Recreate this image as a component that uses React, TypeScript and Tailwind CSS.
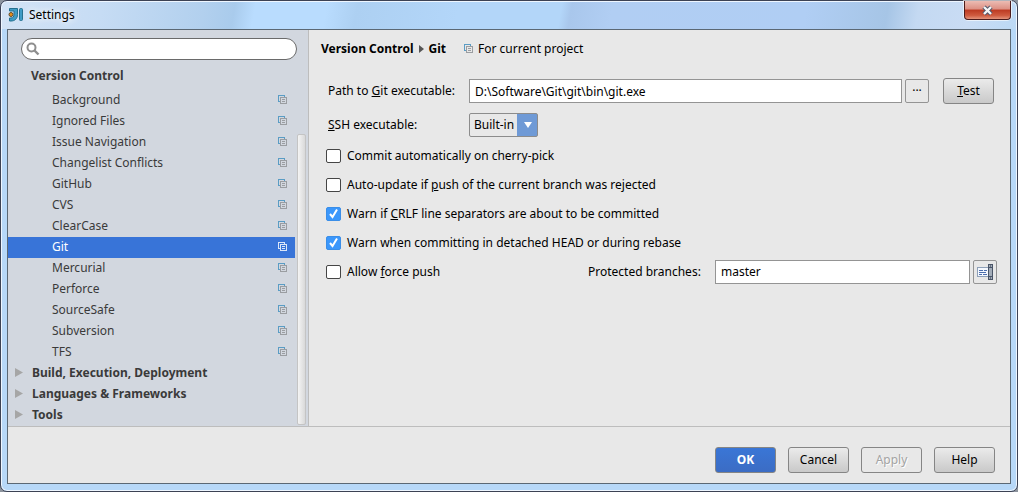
import { useState } from "react"
import type { ReactNode } from "react"
import { clsx } from "clsx"

const versionControlItems = [
  "Background",
  "Ignored Files",
  "Issue Navigation",
  "Changelist Conflicts",
  "GitHub",
  "CVS",
  "ClearCase",
  "Git",
  "Mercurial",
  "Perforce",
  "SourceSafe",
  "Subversion",
  "TFS",
]

const groups = ["Build, Execution, Deployment", "Languages & Frameworks", "Tools"]

function AppLogo() {
  return (
    <svg width="16" height="16" viewBox="0 0 16 16" aria-hidden="true">
      <path
        d="M2.5 1.500h8V7.500c0 4-2.500 6.500-6.500 6.500H2.500v-3H4c2 0 3-1.500 3-3.500V4H2.500z"
        fill="#3f9cc6"
        stroke="#24708f"
      />
      <rect x="12.500" y="1.500" width="3" height="12" rx="1" fill="#3f9cc6" stroke="#24708f" />
      <circle cx="4" cy="7.500" r="2" fill="#e8901c" stroke="#5d4a2a" />
    </svg>
  )
}

function ProjectIcon({ selected = false }: { selected?: boolean }) {
  const back = selected ? "#dbe6f8" : "#5a9cc4"
  const front = selected ? "#dbe6f8" : "#9a9da1"
  return (
    <svg className="shrink-0" width="9" height="9" viewBox="0 0 9 9" aria-hidden="true" shapeRendering="crispEdges">
      <path d="M2 6.5H.5v-6h6V2" fill="none" stroke={back} />
      <rect x="2.5" y="2.5" width="6" height="6" fill="none" stroke={front} />
      <path d="M4 4.5h3M4 6.5h3" stroke={front} />
    </svg>
  )
}

function Checkbox({
  label,
  defaultChecked = false,
}: {
  label: ReactNode
  defaultChecked?: boolean
}) {
  return (
    <label className="flex h-[29px] items-center gap-1.5">
      <span className="grid">
        <input
          type="checkbox"
          defaultChecked={defaultChecked}
          className="peer col-start-1 row-start-1 h-[14px] w-[15px] appearance-none rounded-[2px] border border-[#454545] bg-white checked:border-[#3a8ee8] checked:bg-[#3b97fb]"
        />
        <svg
          className="pointer-events-none invisible col-start-1 row-start-1 peer-checked:visible"
          width="15"
          height="14"
          viewBox="0 0 15 14"
          aria-hidden="true"
        >
          <path d="M4 7l2.500 3L11 2.500" fill="none" stroke="#fff" strokeWidth="2" />
        </svg>
      </span>
      <span>{label}</span>
    </label>
  )
}

function Button({
  children,
  className = "w-[61px]",
  primary = false,
  disabled = false,
}: {
  children: ReactNode
  className?: string
  primary?: boolean
  disabled?: boolean
}) {
  return (
    <button
      type="button"
      disabled={disabled}
      className={clsx(
        "h-[26px] rounded-[3px] border border-[#858585]",
        className,
        primary && "bg-linear-to-b from-[#3a76d6] to-[#3b6cc4] font-bold text-white",
        disabled && "text-[#a3a3a3] [text-shadow:1px_1px_0_#fff]",
        !primary && !disabled && "bg-linear-to-b from-[#ebebeb] to-[#c9c9c9]"
      )}
    >
      {children}
    </button>
  )
}

function TitleBar() {
  return (
    <header className="flex h-7 items-start">
      <div className="flex h-7 items-center gap-1.5">
        <AppLogo />
        <h1 className="[text-shadow:0_0_6px_#fff,0_0_10px_#fff]">Settings</h1>
      </div>
      <button
        type="button"
        aria-label="Close"
        className="ml-auto flex h-[19px] w-[47px] items-center justify-center rounded-b-[4px] border border-t-0 border-[#4c1c1c] bg-[linear-gradient(#ecbcb3_0%,#dc8f83_45%,#bc3a22_50%,#cf5b3f_80%,#e3937b_100%)] shadow-[0_0_0_1px_#ffffff99]"
      >
        <svg width="13" height="11" viewBox="0 0 13 11" aria-hidden="true">
          <path d="M3 2l7 7M10 2l-7 7" stroke="#50566a" strokeWidth="4.4" />
          <path d="M3 2l7 7M10 2l-7 7" stroke="#f6f6f6" strokeWidth="2.4" />
        </svg>
      </button>
    </header>
  )
}

function Sidebar() {
  const [selected, setSelected] = useState("Git")

  return (
    <nav className="flex w-[301px] shrink-0 flex-col border-r border-[#bdbdbd] bg-[#d2d7df] text-[#3a3a3a]">
      <div className="pt-2 pr-[11px] pl-[13px]">
        <label className="flex h-[22px] items-center gap-1 rounded-full border border-[#6a6a6a] bg-white px-1">
          <svg width="14" height="14" viewBox="0 0 14 14" aria-hidden="true">
            <circle cx="5.5" cy="5.5" r="4" fill="none" stroke="#8e8e8e" strokeWidth="2" />
            <path d="M8.5 8.5l4 4" stroke="#8e8e8e" strokeWidth="2.4" />
          </svg>
          <input type="search" aria-label="Search settings" className="min-w-0 flex-1 outline-none" />
        </label>
      </div>
      <h2 className="h-[30px] pl-[23px] leading-8 font-bold">Version Control</h2>
      <div className="flex flex-1">
        <div className="flex-1">
          <ul>
            {versionControlItems.map((item) => (
              <li key={item}>
                <button
                  type="button"
                  onClick={() => setSelected(item)}
                  className={clsx(
                    "flex h-[21px] w-full items-center justify-between pr-2 pb-[2px] pl-11",
                    item === selected && "bg-[#3874d8] text-white"
                  )}
                >
                  {item}
                  <ProjectIcon selected={item === selected} />
                </button>
              </li>
            ))}
          </ul>
          <ul>
            {groups.map((group) => (
              <li key={group}>
                <button type="button" className="flex h-[21px] w-full items-center gap-[9px] pb-[2px] pl-[7px] font-bold">
                  <svg width="8" height="9" viewBox="0 0 8 9" aria-hidden="true">
                    <path d="M0 0l8 4.5L0 9z" fill="#a6a6a6" />
                  </svg>
                  {group}
                </button>
              </li>
            ))}
          </ul>
        </div>
        <div className="flex w-[13px] pt-11 pr-[2px] pb-px pl-[2px]">
          <div className="flex-1 rounded-[2px] border border-[#c4c4c4] bg-linear-to-r from-[#f4f4f4] to-[#d9d9d9]" />
        </div>
      </div>
    </nav>
  )
}

function GitSettings() {
  return (
    <main className="min-w-0 flex-1 px-3">
      <div className="flex h-[37px] items-center">
        <h2 className="flex items-center gap-[5px] font-bold">
          Version Control
          <svg width="5" height="8" viewBox="0 0 5 8" aria-hidden="true">
            <path d="M0 0l5 4-5 4z" fill="#555" />
          </svg>
          Git
        </h2>
        <span className="ml-[18px] flex items-center gap-[5px]">
          <ProjectIcon />
          For current project
        </span>
      </div>

      <form className="pt-[11px]">
        <div className="flex items-center pr-1 pl-[7px]">
          <label htmlFor="git-path" className="w-[141px] shrink-0">
            Path to <u>G</u>it executable:
          </label>
          <input
            id="git-path"
            defaultValue="D:\Software\Git\git\bin\git.exe"
            className="h-6 min-w-0 flex-1 border border-[#949494] bg-white px-[5px]"
          />
          <button
            type="button"
            aria-label="Browse"
            className="ml-[3px] h-6 w-6 rounded-[2px] border border-[#949494]"
          >
            ···
          </button>
          <Button className="ml-3.5 w-[51px]">
            <u>T</u>est
          </Button>
        </div>

        <div className="mt-[9px] mb-1 flex items-center pl-[7px]">
          <label htmlFor="ssh" className="w-[141px] shrink-0">
            <u>S</u>SH executable:
          </label>
          <span className="grid items-center">
            <select
              id="ssh"
              className="col-start-1 row-start-1 h-6 w-[69px] appearance-none rounded-[2px] border border-[#8c8c8c] bg-[linear-gradient(to_left,#6f9ad6_20px,transparent_20px)] pl-1"
            >
              <option>Built-in</option>
              <option>Native</option>
            </select>
            <svg
              className="pointer-events-none col-start-1 row-start-1 mr-1.5 justify-self-end"
              width="8"
              height="6"
              viewBox="0 0 8 6"
              aria-hidden="true"
            >
              <path d="M0 0h8L4 6z" fill="#fff" />
            </svg>
          </span>
        </div>

        <div className="pr-px pl-[5px]">
          <Checkbox label="Commit automatically on cherry-pick" />
          <Checkbox label={<>Auto-update if <u>p</u>ush of the current branch was rejected</>} />
          <Checkbox defaultChecked label={<>Warn if <u>C</u>RLF line separators are about to be committed</>} />
          <Checkbox defaultChecked label="Warn when committing in detached HEAD or during rebase" />
          <div className="flex items-center">
            <div className="w-[262px] shrink-0">
              <Checkbox label={<>Allow <u>f</u>orce push</>} />
            </div>
            <label htmlFor="branches" className="w-[127px] shrink-0">
              Protected branches:
            </label>
            <input
              id="branches"
              defaultValue="master"
              className="h-6 min-w-0 flex-1 border border-[#949494] bg-white px-[5px]"
            />
            <button
              type="button"
              aria-label="Edit protected branches"
              className="ml-[3px] flex h-6 w-6 items-center justify-center rounded-[2px] border border-[#949494]"
            >
              <svg width="16" height="16" viewBox="0 0 16 16" aria-hidden="true">
                <rect x=".5" y="3.5" width="11" height="9" fill="#f4f8ff" stroke="#8ea0b8" />
                <path d="M2 6.5h4M7 6.5h3M2 8.5h7M2 10.5h3M6 10.5h4" stroke="#4c6fae" />
                <rect x="11.5" y=".5" width="4" height="15" fill="#a3adb9" stroke="#4a5568" />
                <path d="M12 3.5h3M12 12.5h3" stroke="#4a5568" />
                <path d="M13 2h1M13 14h1" stroke="#2d3748" />
              </svg>
            </button>
          </div>
        </div>
      </form>
    </main>
  )
}

export default function App() {
  return (
    <div className="flex min-h-screen bg-[#8d949e] font-['Noto_Sans','Open_Sans',sans-serif] text-[12px] leading-4 text-black">
      <div className="flex flex-1 flex-col rounded-[7px] border border-[#3c4254] bg-[#b7d8f8] bg-[linear-gradient(100deg,#d3e3f5_0%,#c6dcf4_10%,#b2d0ee_20%,#a9cbec_23%,#b9dcfe_25%,#b9dcfe_32%,#add0f2_35%,#b3d6f9_45%,#b3d6f9_55%,#a9c7ec_56%,#b1cef3_60%,#b0cef4_79%,#a6c5e6_87%,#c4d9f2_90%,#c9dcf4_95%,#bcd9f5_100%)] bg-[length:100%_28px] bg-no-repeat px-1.5 pb-[7px] shadow-[inset_0_0_0_1px_#eef6ff]">
        <TitleBar />
        <div className="flex flex-1 flex-col border border-[#5b6874] bg-[#e8e8e8]">
          <div className="flex flex-1 border-b border-[#bdbdbd]">
            <Sidebar />
            <GitSettings />
          </div>
          <footer className="flex justify-end gap-3 pt-5 pr-[15px] pb-[10px]">
            <Button primary>OK</Button>
            <Button>Cancel</Button>
            <Button disabled>Apply</Button>
            <Button>Help</Button>
          </footer>
        </div>
      </div>
    </div>
  )
}
